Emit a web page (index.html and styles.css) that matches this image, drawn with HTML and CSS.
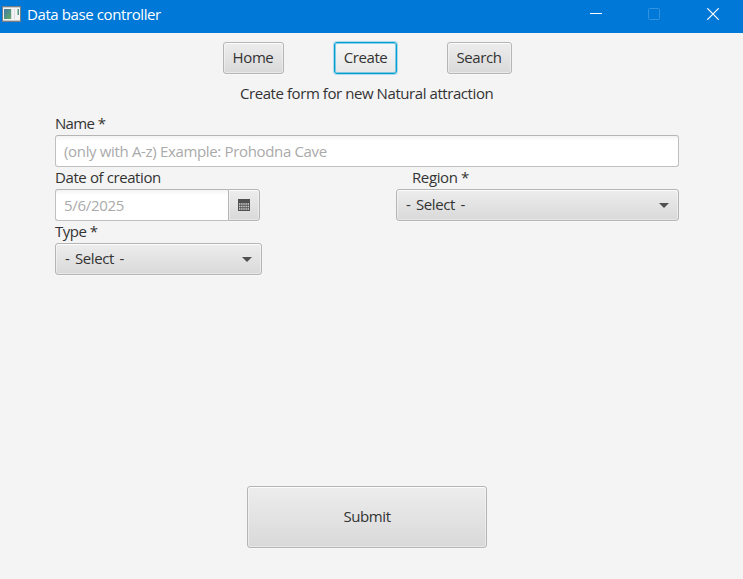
FILE: index.html
```html
<!DOCTYPE html>
<html lang="en">
<head>
<meta charset="utf-8">
<title>Data base controller</title>
<link rel="stylesheet" href="styles.css">
</head>
<body>
<div class="window">
  <header class="titlebar">
    <svg class="app-icon" width="19" height="17" viewBox="0 0 19 17">
      <defs><linearGradient id="pane" x1="0" y1="0" x2="1" y2="1"><stop offset="0" stop-color="#4579a8"/><stop offset="1" stop-color="#62ad62"/></linearGradient></defs>
      <rect x=".5" y=".5" width="18" height="15" fill="#f3f3f3" stroke="#777d83"/>
      <path d="M1 1.5h17" stroke="#c9ced2"/>
      <rect x="2" y="3" width="7" height="10" fill="url(#pane)"/>
      <path d="M9.5 3v10M12.500 3v10" stroke="#d9dddf"/>
      <rect x="15.500" y="3" width="1.500" height="6" fill="#559a80"/>
      <path d="M1 14.500h17" stroke="#c8c8c8"/>
    </svg>
    <h1 class="title">Data base controller</h1>
    <div class="controls">
      <svg width="12" height="12" viewBox="0 0 12 12"><path d="M0 5.500h12" stroke="#fff"/></svg>
      <svg width="12" height="12" viewBox="0 0 12 12"><rect x=".5" y=".5" width="11" height="11" rx="1" fill="none" stroke="#3393df"/></svg>
      <svg width="12" height="12" viewBox="0 0 12 12"><path d="M.3.3l11.400 11.400M11.700.3L.3 11.700" stroke="#fff" stroke-width="1.200"/></svg>
    </div>
  </header>
  <main class="content">
    <nav class="nav">
      <button class="btn home"><span>Home</span></button>
      <button class="btn create focused"><span>Create</span></button>
      <button class="btn search"><span>Search</span></button>
    </nav>
    <p class="heading"><span>Create form for new Natural attraction</span></p>
    <form class="form">
      <div class="field wide">
        <label>Name *</label>
        <div class="input"><span class="hint">(only with A-z) Example: Prohodna Cave</span></div>
      </div>
      <div class="field date">
        <label class="date-label">Date of creation</label>
        <div class="picker">
          <div class="input"><span class="value">5/6/2025</span></div>
          <div class="btn calendar">
            <svg width="12" height="12" viewBox="0 0 12 12"><path d="M0 0h12v12H0z" fill="#505050"/><path d="M1 5h10M1 7.500h10M1 10h10" stroke="#d8d8d8" stroke-width="1.300" stroke-dasharray="1.400 .75"/></svg>
          </div>
        </div>
      </div>
      <div class="field region">
        <label class="indent">Region *</label>
        <div class="btn select"><span>- Select -</span><svg width="10" height="5" viewBox="0 0 10 5"><path d="M0 0h10L5 5z" fill="#505050"/></svg></div>
      </div>
      <div class="field type">
        <label>Type *</label>
        <div class="btn select"><span>- Select -</span><svg width="10" height="5" viewBox="0 0 10 5"><path d="M0 0h10L5 5z" fill="#505050"/></svg></div>
      </div>
    </form>
    <button class="btn submit"><span>Submit</span></button>
  </main>
</div>
</body>
</html>
```
FILE: styles.css
```css
* { box-sizing: border-box; }
body {
  margin: 0;
  background: #f4f4f4;
  color: #333;
  font: 15px/22px "Open Sans", "Noto Sans", sans-serif;
  letter-spacing: -0.4px;
}
.window { height: 579px; display: flex; flex-direction: column; overflow: hidden; }
.titlebar {
  height: 33px;
  flex: none;
  display: flex;
  align-items: flex-start;
  padding-left: 2px;
  background: #0078d7;
  color: #fff;
}
.app-icon { margin-top: 6px; }
.title { margin: 3px 0 0 6px; font-size: 15px; font-weight: 400; line-height: 22px; }
.controls { display: flex; gap: 46px; margin: 8px 24px 0 auto; }
.controls svg { display: block; }
.controls svg:nth-child(2) { margin-right: 1px; }
.content { flex: 1; display: flex; flex-direction: column; padding-top: 9px; }
.nav { display: flex; gap: 50px; padding-left: 223px; }
.btn {
  display: flex;
  align-items: center;
  justify-content: center;
  height: 32px;
  padding: 0;
  border: 1px solid #b5b5b5;
  border-radius: 3px;
  background: linear-gradient(#ededed, #d9d9d9);
  box-shadow: inset 0 0 0 1px rgba(255, 255, 255, 0.4), inset 0 1px 0 #fafafa, 0 1px 0 #f9f9f9;
  color: #333;
  font: inherit;
  letter-spacing: inherit;
}
.btn span { padding-bottom: 2px; }
.home { width: 61px; }
.create { width: 63px; }
.search { width: 65px; }
.home span, .search span { margin-right: 1px; }
.focused {
  border-color: #039ed3;
  background: linear-gradient(#f7f7f7, #e7e7e7);
  box-shadow: 0 0 0 1px rgba(3, 158, 211, 0.3), inset 0 0 0 1px rgba(3, 158, 211, 0.45);
}
.heading { margin: 8px 0 9px; padding-left: 240px; letter-spacing: -0.43px; }
.form {
  display: grid;
  grid-template-columns: 207px 283px;
  justify-content: space-between;
  width: 624px;
  margin-left: 55px;
}
.wide { grid-column: 1 / 3; }
.field label { display: block; height: 22px; line-height: 20px; }
.wide label { letter-spacing: -0.7px; word-spacing: 0.5px; }
.type label { letter-spacing: -0.5px; }
.indent { padding-left: 16px; }
.input {
  display: flex;
  align-items: center;
  height: 32px;
  padding: 0 8px 1px;
  border: 1px solid #c0c0c0;
  border-top-color: #b5b5b5;
  border-radius: 3px;
  background: linear-gradient(#f3f3f3, #fff 5px);
  color: #aaa;
}
.hint { letter-spacing: -0.34px; }
.value { letter-spacing: -0.3px; }
.picker { display: flex; width: 205px; }
.picker .input { flex: 1; border-radius: 3px 0 0 3px; border-right: 0; }
.calendar { width: 32px; border-radius: 0 3px 3px 0; }
.select { justify-content: space-between; padding: 0 9px; }
.select span { word-spacing: 2px; }
.submit { width: 240px; height: 62px; margin: auto 0 31px 247px; }
```
